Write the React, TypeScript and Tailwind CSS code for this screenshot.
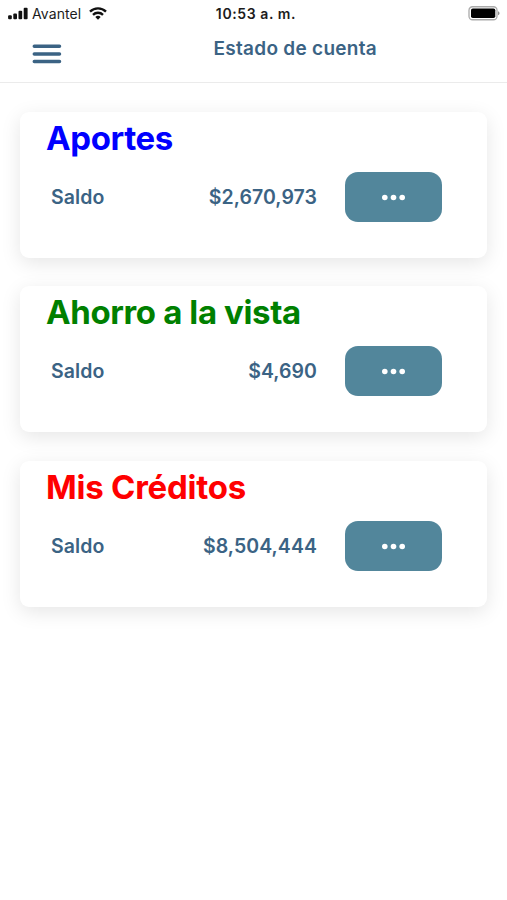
type Account = {
  title: string;
  color: string;
  balance: string;
};

const accounts: Account[] = [
  { title: "Aportes", color: "text-[#0000ff] tracking-[-0.4px]", balance: "$2,670,973" },
  { title: "Ahorro a la vista", color: "text-[#008000] tracking-[-0.38px]", balance: "$4,690" },
  { title: "Mis Créditos", color: "text-[#ff0000] tracking-[-0.25px]", balance: "$8,504,444" },
];

const StatusBar = () => (
  <div className="grid h-7 grid-cols-[1fr_auto_1fr] items-start px-2 pt-[5px] text-[14px] leading-[18px] text-[#1c1c1c]">
    <div className="flex items-center">
      <svg className="-mt-px" width="20" height="13" viewBox="0 0 20 13" fill="#111">
        <rect x="0.1" y="8.3" width="3.7" height="4" rx="1" />
        <rect x="5.3" y="6.5" width="3.7" height="5.8" rx="1" />
        <rect x="10.5" y="3.8" width="3.7" height="8.5" rx="1" />
        <rect x="15.7" y="0.8" width="3.9" height="11.5" rx="1" />
      </svg>
      <span className="ml-1 tracking-[0.1px]">Avantel</span>
      <svg className="-mt-px ml-2" width="18" height="13" viewBox="0 0 18 13" fill="none" stroke="#111" strokeWidth="2.4">
        <path d="M1 4.6a11.5 11.5 0 0 1 16 0" />
        <path d="M4 7.8a7.2 7.2 0 0 1 10 0" />
        <path d="M9 12.8L6.3 10a3.9 3.9 0 0 1 5.4 0z" fill="#111" stroke="none" />
      </svg>
    </div>
    <span className="ml-[5px] font-semibold tracking-[0.6px]">10:53 a. m.</span>
    <svg className="-mr-px mt-px justify-self-end" width="32" height="15" viewBox="0 0 32 15">
      <rect x="1" y="0.75" width="28" height="13" rx="3.5" fill="none" stroke="#aaa" strokeWidth="1.3" />
      <rect x="3" y="2.5" width="24.3" height="9.5" rx="1.8" fill="#000" />
      <path d="M30.2 5.3c1.7.7 1.7 3.3 0 4z" fill="#777" />
    </svg>
  </div>
);

const AccountCard = ({ title, color, balance }: Account) => (
  <section className="h-[146px] rounded-[9px] bg-white pt-[6px] pl-[26px] shadow-[0_5px_20px_rgba(0,0,0,0.1)]">
    <h2 className={`text-[33px] leading-[40px] font-bold ${color}`}>{title}</h2>
    <div className="mt-[14px] flex items-center pr-[45px] pl-[5px] text-[19.5px] font-semibold text-[#3b6384]">
      <span className="pt-[2px] tracking-[0.1px]">Saldo</span>
      <span className="ml-auto pt-[2px] tracking-[0.06px]">{balance}</span>
      <button className="ml-7 flex h-[50px] w-[97px] items-center justify-center rounded-[13px] bg-[#52869b]">
        <svg width="25" height="8" viewBox="0 0 25 8" fill="#fff">
          <circle cx="3.8" cy="4.5" r="2.8" />
          <circle cx="12.5" cy="4.5" r="2.8" />
          <circle cx="21.2" cy="4.5" r="2.8" />
        </svg>
      </button>
    </div>
  </section>
);

export default function App() {
  return (
    <div className="min-h-screen bg-white font-[Inter,sans-serif]">
      <StatusBar />
      <header className="flex h-[55px] items-start border-b border-[#ebebeb] pl-8">
        <button className="mt-4">
          <svg width="30" height="20" viewBox="0 0 30 20" stroke="#3b6384" strokeWidth="3.5" strokeLinecap="round">
            <path d="M2.3 2.3h25.2M2.3 9.9h25.2M2.3 17.6h25.2" />
          </svg>
        </button>
        <h1 className="ml-[151.5px] pt-[6.5px] text-[19px] leading-7 font-semibold tracking-[0.28px] text-[#3b6384]">
          Estado de cuenta
        </h1>
      </header>
      <main className="flex flex-col gap-[28.5px] px-5 pt-[28.5px]">
        {accounts.map((account) => (
          <AccountCard key={account.title} {...account} />
        ))}
      </main>
    </div>
  );
}
